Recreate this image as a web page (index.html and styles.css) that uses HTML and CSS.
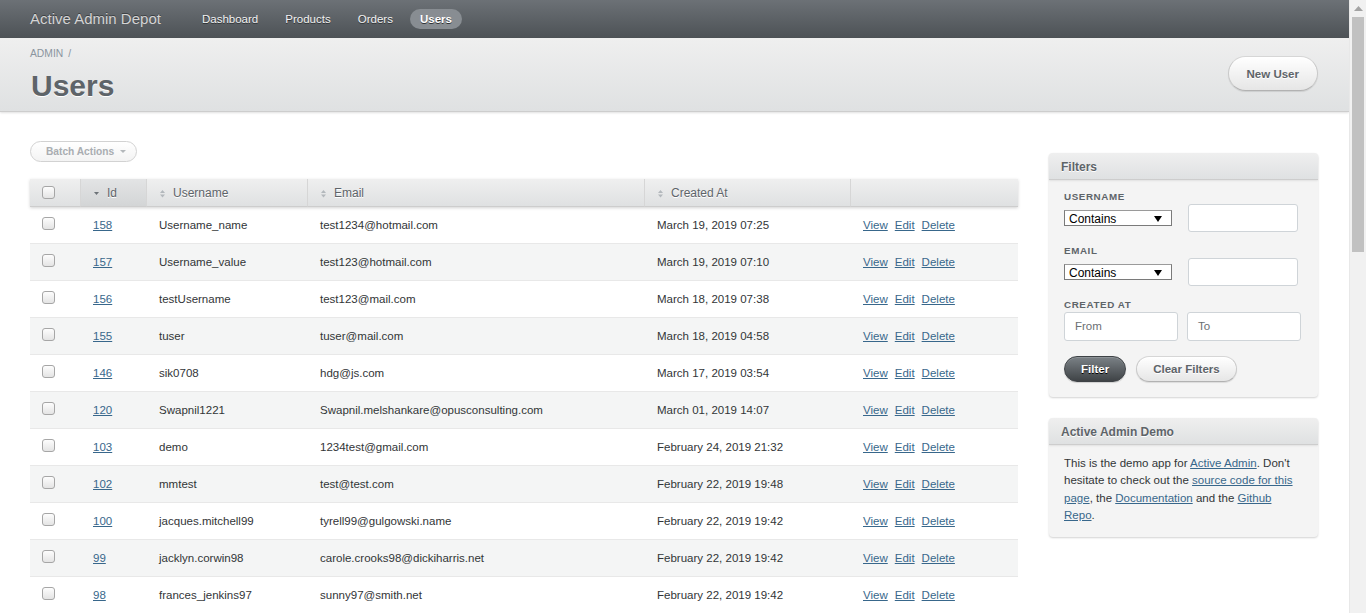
FILE: index.html
```html
<!DOCTYPE html>
<html lang="en">
<head>
<meta charset="utf-8">
<title>Users | Active Admin Depot</title>
<link rel="stylesheet" href="styles.css">
</head>
<body>
<div class="page">
<header class="site-header">
  <h1 class="site-title">Active Admin Depot</h1>
  <nav class="tabs">
    <a class="tab" href="#">Dashboard</a>
    <a class="tab" href="#">Products</a>
    <a class="tab" href="#">Orders</a>
    <a class="tab current" href="#">Users</a>
  </nav>
</header>

<div class="title-bar">
  <div class="title-left">
    <div class="breadcrumb"><a href="#">Admin</a><span class="sep">/</span></div>
    <h2 class="page-title">Users</h2>
  </div>
  <a class="button light new-btn" href="#">New User</a>
</div>

<div class="content">
  <main class="main">
    <div class="batch">Batch Actions <span class="caret"></span></div>
    <table class="index-table">
      <colgroup>
        <col class="c-check"><col class="c-id"><col class="c-user"><col class="c-email"><col class="c-date"><col class="c-act">
      </colgroup>
      <thead>
        <tr>
          <th><span class="cb"></span></th>
          <th class="sorted"><svg class="sort" width="7" height="9" viewBox="0 0 7 9"><path d="M1 3h5l-2.5 3z" fill="#6d7378"/></svg>Id</th>
          <th><svg class="sort" width="7" height="9" viewBox="0 0 7 9"><path d="M1 4h5l-2.5-3zM1 5.5h5l-2.5 3z" fill="#b3b8bc"/></svg>Username</th>
          <th><svg class="sort" width="7" height="9" viewBox="0 0 7 9"><path d="M1 4h5l-2.5-3zM1 5.5h5l-2.5 3z" fill="#b3b8bc"/></svg>Email</th>
          <th><svg class="sort" width="7" height="9" viewBox="0 0 7 9"><path d="M1 4h5l-2.5-3zM1 5.5h5l-2.5 3z" fill="#b3b8bc"/></svg>Created At</th>
          <th></th>
        </tr>
      </thead>
      <tbody>
        <tr><td><span class="cb"></span></td><td><a href="#">158</a></td><td>Username_name</td><td>test1234@hotmail.com</td><td>March 19, 2019 07:25</td><td class="acts"><a href="#">View</a><a href="#">Edit</a><a href="#">Delete</a></td></tr>
        <tr><td><span class="cb"></span></td><td><a href="#">157</a></td><td>Username_value</td><td>test123@hotmail.com</td><td>March 19, 2019 07:10</td><td class="acts"><a href="#">View</a><a href="#">Edit</a><a href="#">Delete</a></td></tr>
        <tr><td><span class="cb"></span></td><td><a href="#">156</a></td><td>testUsername</td><td>test123@mail.com</td><td>March 18, 2019 07:38</td><td class="acts"><a href="#">View</a><a href="#">Edit</a><a href="#">Delete</a></td></tr>
        <tr><td><span class="cb"></span></td><td><a href="#">155</a></td><td>tuser</td><td>tuser@mail.com</td><td>March 18, 2019 04:58</td><td class="acts"><a href="#">View</a><a href="#">Edit</a><a href="#">Delete</a></td></tr>
        <tr><td><span class="cb"></span></td><td><a href="#">146</a></td><td>sik0708</td><td>hdg@js.com</td><td>March 17, 2019 03:54</td><td class="acts"><a href="#">View</a><a href="#">Edit</a><a href="#">Delete</a></td></tr>
        <tr><td><span class="cb"></span></td><td><a href="#">120</a></td><td>Swapnil1221</td><td>Swapnil.melshankare@opusconsulting.com</td><td>March 01, 2019 14:07</td><td class="acts"><a href="#">View</a><a href="#">Edit</a><a href="#">Delete</a></td></tr>
        <tr><td><span class="cb"></span></td><td><a href="#">103</a></td><td>demo</td><td>1234test@gmail.com</td><td>February 24, 2019 21:32</td><td class="acts"><a href="#">View</a><a href="#">Edit</a><a href="#">Delete</a></td></tr>
        <tr><td><span class="cb"></span></td><td><a href="#">102</a></td><td>mmtest</td><td>test@test.com</td><td>February 22, 2019 19:48</td><td class="acts"><a href="#">View</a><a href="#">Edit</a><a href="#">Delete</a></td></tr>
        <tr><td><span class="cb"></span></td><td><a href="#">100</a></td><td>jacques.mitchell99</td><td>tyrell99@gulgowski.name</td><td>February 22, 2019 19:42</td><td class="acts"><a href="#">View</a><a href="#">Edit</a><a href="#">Delete</a></td></tr>
        <tr><td><span class="cb"></span></td><td><a href="#">99</a></td><td>jacklyn.corwin98</td><td>carole.crooks98@dickiharris.net</td><td>February 22, 2019 19:42</td><td class="acts"><a href="#">View</a><a href="#">Edit</a><a href="#">Delete</a></td></tr>
        <tr><td><span class="cb"></span></td><td><a href="#">98</a></td><td>frances_jenkins97</td><td>sunny97@smith.net</td><td>February 22, 2019 19:42</td><td class="acts"><a href="#">View</a><a href="#">Edit</a><a href="#">Delete</a></td></tr>
        <tr><td><span class="cb"></span></td><td><a href="#">97</a></td><td>ernest.kuhn96</td><td>lyle96@haag.info</td><td>February 22, 2019 19:42</td><td class="acts"><a href="#">View</a><a href="#">Edit</a><a href="#">Delete</a></td></tr>
        <tr><td><span class="cb"></span></td><td><a href="#">96</a></td><td>marcus_bode95</td><td>ivy95@kerluke.org</td><td>February 22, 2019 19:42</td><td class="acts"><a href="#">View</a><a href="#">Edit</a><a href="#">Delete</a></td></tr>
      </tbody>
    </table>
  </main>

  <aside class="sidebar">
    <section class="panel">
      <h3 class="panel-head">Filters</h3>
      <div class="panel-body filters">
        <div class="fgroup">
          <div class="flabel">Username</div>
          <div class="frow">
            <div class="select"><span>Contains</span><svg width="8" height="6" viewBox="0 0 8 6"><path d="M0 0h8L4 6z" fill="#000"/></svg></div>
            <div class="input"></div>
          </div>
        </div>
        <div class="fgroup">
          <div class="flabel">Email</div>
          <div class="frow">
            <div class="select"><span>Contains</span><svg width="8" height="6" viewBox="0 0 8 6"><path d="M0 0h8L4 6z" fill="#000"/></svg></div>
            <div class="input"></div>
          </div>
        </div>
        <div class="fgroup">
          <div class="flabel">Created At</div>
          <div class="frow dates">
            <div class="input date">From</div>
            <div class="input date">To</div>
          </div>
        </div>
        <div class="fbuttons">
          <span class="button dark">Filter</span>
          <span class="button light">Clear Filters</span>
        </div>
      </div>
    </section>

    <section class="panel">
      <h3 class="panel-head">Active Admin Demo</h3>
      <div class="panel-body demo">
        This is the demo app for <a href="#">Active Admin</a>. Don't hesitate to check out the <a href="#">source code for this page</a>, the <a href="#">Documentation</a> and the <a href="#">Github Repo</a>.
      </div>
    </section>
  </aside>
</div>
</div>
<div class="scrollbar" aria-hidden="true">
  <div class="sb-arrow"><svg width="9" height="5" viewBox="0 0 9 5"><path d="M0 5h9L4.5 0z" fill="#a3a3a3"/></svg></div>
  <div class="sb-thumb"></div>
</div>
</body>
</html>
```

FILE: styles.css
```css
* { box-sizing: border-box; }
html, body { margin: 0; padding: 0; }
body {
  font-family: "Liberation Sans", Arial, Helvetica, sans-serif;
  font-size: 11.52px;
  line-height: 1.5;
  color: #323537;
  background: #fff;
}
a { color: #38678b; }
.page { margin-right: 17px; }

/* fake browser scrollbar */
.scrollbar {
  position: fixed;
  top: 0;
  right: 0;
  width: 17px;
  height: 100vh;
  background: #f1f1f1;
  border-left: 1px solid #e8e8e8;
}
.sb-arrow { height: 17px; display: flex; align-items: center; justify-content: center; }
.sb-thumb {
  margin: 0 2px 0 2px;
  height: 235px;
  background: #c1c1c1;
}

/* Header */
.site-header {
  height: 38px;
  background: linear-gradient(#6c7176, #4d5256);
  display: flex;
  align-items: center;
  padding: 0 30px;
}
.site-title {
  margin: 0 31px 0 0;
  font-size: 15px;
  font-weight: normal;
  color: #d4d4d4;
  line-height: 20px;
  text-shadow: 0 -1px 0 #3d4144;
}
.tabs { display: flex; gap: 7px; }
.tab {
  display: block;
  color: #f2f2f2;
  text-decoration: none;
  padding: 0 10px;
  height: 20px;
  line-height: 20px;
  border-radius: 10px;
  text-shadow: 0 1px 0 #2f3336;
}
.tab.current {
  background: #888d92;
  font-weight: bold;
  color: #fff;
}

/* Title bar */
.title-bar {
  height: 74px;
  background: linear-gradient(#efefef, #dfe1e2);
  border-bottom: 1px solid #cdcdcd;
  box-shadow: 0 1px 2px rgba(0,0,0,0.12);
  display: flex;
  justify-content: space-between;
  align-items: flex-start;
  padding: 0 31px 0 30px;
}
.title-left { padding-top: 10px; }
.breadcrumb {
  font-size: 10.3px;
  line-height: 12px;
  color: #8a949e;
  text-transform: uppercase;
}
.breadcrumb a { color: #8a949e; text-decoration: none; }
.breadcrumb .sep { margin-left: 5px; }
.page-title {
  margin: 8px 0 0 1px;
  font-size: 30px;
  line-height: 36px;
  font-weight: bold;
  color: #5e6469;
  text-shadow: 0 1px 0 #fff;
}
.new-btn { margin-top: 18px; height: 35px; line-height: 34px; padding: 0 18px; }

/* Buttons */
.button {
  display: inline-block;
  border-radius: 200px;
  font-weight: bold;
  text-decoration: none;
  white-space: nowrap;
}
.button.light {
  background: linear-gradient(#ffffff, #e6e6e6);
  border: 1px solid #c9c9c9;
  border-top-color: #d6d6d6;
  border-bottom-color: #b2b2b2;
  box-shadow: 0 1px 1px rgba(0,0,0,0.1), inset 0 1px 0 #fff;
  color: #5e6469;
  text-shadow: 0 1px 0 #fff;
}
.button.dark {
  background: linear-gradient(#7b8186, #3f4346);
  border: 1px solid #3e4246;
  box-shadow: 0 1px 1px rgba(0,0,0,0.15), inset 0 1px 0 rgba(255,255,255,0.15);
  color: #fff;
  text-shadow: 0 1px 0 #000;
}

/* Content */
.content {
  display: flex;
  align-items: flex-start;
  gap: 31px;
  padding: 29px 31px 30px 30px;
}
.main { flex: 1; min-width: 0; }
.sidebar { width: 269px; flex: none; margin-top: 12px; }

.batch {
  display: inline-flex;
  align-items: center;
  height: 21px;
  width: 107px;
  padding-left: 15px;
  border: 1px solid #d2d2d2;
  border-radius: 200px;
  background: linear-gradient(#ffffff, #f3f3f3);
  font-size: 10.2px;
  font-weight: bold;
  color: #a9adb1;
  line-height: 19px;
}
.caret {
  display: inline-block;
  margin-left: 6px;
  width: 0; height: 0;
  border-left: 3px solid transparent;
  border-right: 3px solid transparent;
  border-top: 3px solid #b4b8bb;
}

/* Table */
.index-table {
  margin-top: 17px;
  width: 100%;
  border-collapse: separate;
  border-spacing: 0;
  table-layout: fixed;
}
.c-check { width: 51px; }
.c-id { width: 66px; }
.c-user { width: 161px; }
.c-email { width: 337px; }
.c-date { width: 206px; }
.index-table thead tr { box-shadow: 0 1px 3px rgba(0,0,0,0.18); }
.index-table th {
  height: 28px;
  padding: 1px 12px 0;
  text-align: left;
  font-size: 12px;
  font-weight: normal;
  color: #5e6469;
  text-shadow: 0 1px 0 #fff;
  background: linear-gradient(#efefef, #dfe1e2);
  border-right: 1px solid #d6d6d6;
  border-bottom: 1px solid #cdcdcd;
  white-space: nowrap;
  vertical-align: middle;
}
.index-table th:last-child { border-right: none; }
.index-table th.sorted { background: linear-gradient(#e3e4e5, #d3d5d6); }
.sort { vertical-align: -1px; margin-right: 7px; }
.index-table td {
  padding: 9px 12px 9px;
  line-height: 18px;
  border-bottom: 1px solid #e8e8e8;
  white-space: nowrap;
  overflow: hidden;
  vertical-align: top;
}
.index-table tbody tr:nth-child(even) td { background: #f4f5f5; }
.acts a { margin-right: 7px; }

.cb {
  display: inline-block;
  width: 13px;
  height: 13px;
  border: 1px solid #a6a6a6;
  border-radius: 3px;
  background: linear-gradient(#fdfdfd, #e4e4e4);
  vertical-align: top;
}
td .cb { margin-top: 1px; }
th .cb { vertical-align: middle; margin-top: -3px; }

/* Sidebar panels */
.panel {
  background: #f4f4f4;
  border-radius: 4px;
  box-shadow: 0 1px 2px rgba(0,0,0,0.18);
  margin-bottom: 21px;
}
.panel-head {
  margin: 0;
  height: 27px;
  line-height: 29px;
  padding: 0 12px;
  font-size: 12px;
  font-weight: bold;
  color: #5e6469;
  text-shadow: 0 1px 0 #fff;
  background: linear-gradient(#efefef, #dfe1e2);
  border-bottom: 1px solid #cdcdcd;
  border-radius: 4px 4px 0 0;
  box-shadow: 0 1px 2px rgba(0,0,0,0.08);
}
.panel-body { padding: 10px 15px 15px; }
.fgroup { margin-bottom: 12px; }
.flabel {
  font-size: 9.8px;
  line-height: 13px;
  font-weight: bold;
  text-transform: uppercase;
  letter-spacing: 0.6px;
  color: #5e6469;
  margin-bottom: 1px;
}
.frow { display: flex; align-items: center; }
.select {
  width: 108px;
  height: 16px;
  border: 1px solid #7a7a7a;
  border-top-color: #9a9a9a;
  background: #fff;
  display: flex;
  align-items: center;
  justify-content: space-between;
  padding: 1px 9px 0 4px;
  font-size: 12px;
  line-height: 14px;
  color: #000;
  margin-right: 16px;
}
.input {
  width: 110px;
  height: 28px;
  background: #fff;
  border: 1px solid #cfd4d8;
  border-radius: 3px;
}
.dates { gap: 9px; }
.input.date {
  width: 114px;
  height: 29px;
  padding-left: 10px;
  line-height: 27px;
  font-size: 11.52px;
  color: #6b6f73;
}
.fbuttons { display: flex; gap: 10px; margin-top: 15px; }
.fbuttons .button { height: 26px; line-height: 24px; padding: 0 16px; font-size: 11.52px; }
.demo { padding: 10px 15px 13px; line-height: 17.28px; }
```
